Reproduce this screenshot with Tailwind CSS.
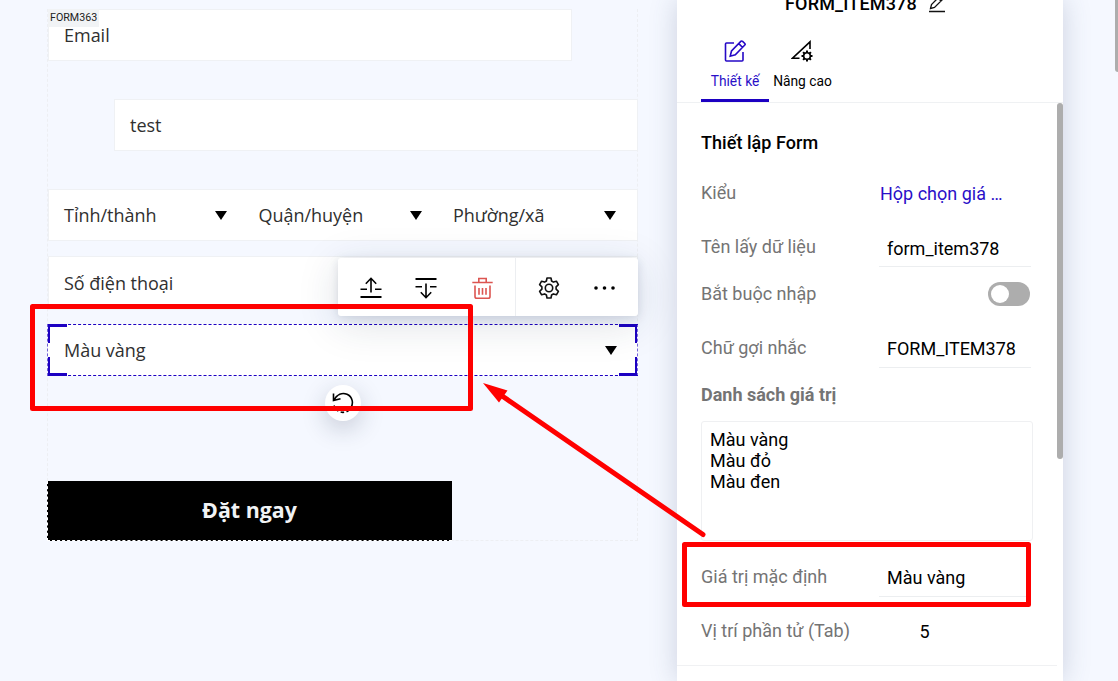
<!DOCTYPE html>
<html lang="vi">
<head>
<meta charset="utf-8">
<title>Form</title>
<script src="https://cdn.jsdelivr.net/npm/@tailwindcss/browser@4"></script>
</head>
<body class="relative flex h-[681px] w-[1118px] overflow-hidden bg-[#f5f8ff] font-['Roboto',sans-serif] text-black">

<main class="w-[677px] shrink-0 pt-[9px] pl-[47px]">
  <div class="relative flex h-[532px] w-[591px] flex-col items-start border-r border-b border-l border-dashed border-[#edeff3] font-['Open_Sans',sans-serif] text-[18px] leading-6 font-normal tracking-[-0.02px] text-[#303030] *:shrink-0">
    <span class="absolute top-0 left-0 h-[18px] w-[51px] bg-[#f1f3f5] pl-[2px] font-['Roboto',sans-serif] text-[10.7px] leading-[18px] font-normal tracking-normal text-[#222]">FORM363</span>
    <div class="flex h-[52px] w-[524px] items-center border border-[#eff1f4] bg-white pl-[15px]">Email</div>
    <div class="mt-[38px] ml-[66px] flex h-[52px] w-[524px] items-center border border-[#eff1f4] bg-white pl-[15px]">test</div>
    <div class="mt-[38px] flex h-[52px] w-[590px] items-center border border-[#eff1f4] bg-white pl-[15px]">
      <div class="flex w-[194.500px] shrink-0 items-center justify-between pr-[32px]">Tỉnh/thành<svg class="h-[9px] w-3" viewBox="0 0 12 9"><path d="M0 0H12L6 9Z"/></svg></div>
      <div class="flex w-[194.500px] shrink-0 items-center justify-between pr-[32px]">Quận/huyện<svg class="mr-[-1px] h-[9px] w-3" viewBox="0 0 12 9"><path d="M0 0H12L6 9Z"/></svg></div>
      <div class="flex w-[194.500px] shrink-0 items-center justify-between pr-[32px]">Phường/xã<svg class="h-[9px] w-3" viewBox="0 0 12 9"><path d="M0 0H12L6 9Z"/></svg></div>
    </div>
    <div class="mt-[15px] flex h-[54px] w-[590px] items-center border border-[#eff1f4] bg-white pl-[15px]">Số điện thoại</div>
    <div class="relative mt-[14px] flex h-[52px] w-[590px] items-center justify-between border-y border-dashed border-[#1c00c2] bg-white pr-[21px] pl-[16px]">
      Màu vàng<svg class="h-[9px] w-3" viewBox="0 0 12 9"><path d="M0 0H12L6 9Z"/></svg>
      <span class="absolute -top-px left-0 h-[19px] w-[19px] border-t-[3px] border-l-2 border-[#1c00c2]"></span>
      <span class="absolute -bottom-px left-0 h-[19px] w-[19px] border-b-[3px] border-l-2 border-[#1c00c2]"></span>
      <span class="absolute -top-px right-px h-[19px] w-[18px] border-t-[3px] border-r-2 border-[#1c00c2]"></span>
      <span class="absolute right-px -bottom-px h-[19px] w-[18px] border-r-2 border-b-[3px] border-[#1c00c2]"></span>
      <span class="absolute -top-px -left-px h-[52px] border-l border-dashed border-[#1c00c2]/60"></span>
      <span class="absolute -top-px right-0 h-[52px] border-l border-dashed border-[#1c00c2]/60"></span>
    </div>
    <div class="mt-[105px] -ml-px flex h-[60px] w-[405px] items-center justify-center border-b border-l border-dashed border-white bg-black pr-px pb-px font-bold text-[21.400px] tracking-normal text-[#f1f3f5]">Đặt ngay</div>

    <div class="absolute top-[249px] left-[290px] flex h-[58px] w-[300px] items-center rounded-[3px] bg-white shadow-[0_8px_40px_rgba(30,45,75,0.15),0_2px_10px_rgba(30,45,75,0.13)]">
      <div class="flex h-full w-[178px] items-center justify-between border-r border-[#eceef1] pt-[2px] pr-[22px] pl-[22px]">
        <svg class="h-[22px] w-[22px]" viewBox="0 0 22 22" fill="none" stroke="#000" stroke-width="1.6"><path d="M11 15.500V1.500M5.800 6.700L11 1.300l5.200 5.400M.5 12.300H7M15 12.300h6.500"/><path d="M.5 20H21.500" stroke-width="2"/></svg>
        <svg class="mr-[2px] h-[22px] w-[22px]" viewBox="0 0 22 22" fill="none" stroke="#000" stroke-width="1.6"><path d="M11 6.500V20.500M5.800 15.300L11 20.700l5.200-5.400M.5 9.700H7M15 9.700h6.500"/><path d="M.5 2H21.500" stroke-width="2"/></svg>
        <svg class="h-[22px] w-[21px]" viewBox="0 0 21 22" fill="none" stroke="#dc5551" stroke-width="1.6"><path d="M.3 5.500H20.700M6.800 5.300V1.500h7.400v3.800M3 8.500V19.400Q3 21.200 4.800 21.200H16.200Q18 21.200 18 19.400V8.500M7 11v6.700M10.500 11v6.700M14 11v6.700"/></svg>
      </div>
      <div class="flex flex-1 items-center justify-between pt-[2px] pr-[23px] pl-[22px]">
        <svg class="h-[22px] w-[22px]" viewBox="0 0 22 22" fill="none" stroke="#111" stroke-width="1.6" stroke-linejoin="round"><path d="M9 1h4l.6 3 1.800 1.100 3-.9 2 3.400-2.300 2.200v2.400l2.300 2.200-2 3.400-3-.9-1.800 1.100-.6 3H9l-.6-3-1.800-1.100-3 .9-2-3.400 2.300-2.200V9.800L1.600 7.600l2-3.400 3 .9L8.400 4z"/><circle cx="11" cy="11" r="3.700"/></svg>
        <svg class="h-[4px] w-[21px]" viewBox="0 0 21 4"><circle cx="2" cy="2" r="1.800"/><circle cx="10.500" cy="2" r="1.800"/><circle cx="19" cy="2" r="1.800"/></svg>
      </div>
    </div>
    <div class="absolute top-[376px] left-[277px] flex h-9 w-9 items-center justify-center rounded-full bg-white shadow-[0_8px_24px_rgba(30,45,75,0.22)]">
      <svg class="h-[22px] w-[22px]" viewBox="0 0 22 22" fill="none" stroke="#000" stroke-width="1.6"><path d="M1.500 1.500V8.500L8.500 6.800M2 8C5 2.500 10 .2 15 2.200C20.500 4.500 22 11.500 18.500 16.500"/><path d="M17.500 17.700C13 22 5 21.500 2 13.500" stroke-dasharray="3.500 2.500"/></svg>
    </div>
  </div>
</main>

<aside class="z-10 h-full w-[386px] shrink-0 bg-white shadow-[0_0_26px_rgba(60,75,110,0.22)]">
  <header class="h-[103px] overflow-hidden border-b border-[#eff1f3] pl-6">
    <div class="-mt-[8px] flex h-6 items-center pl-[84px] text-[18px] leading-6 font-medium tracking-[0.17px]">FORM_ITEM378
      <svg class="ml-[12px] h-[18px] w-4" viewBox="0 0 16 18" fill="none" stroke="#111" stroke-width="1.300"><path d="M0 16.500H16M1.500 13.500l1-4L11 1l3 3-8.500 8.500zM9 3l3 3"/></svg>
    </div>
    <nav class="mt-[24px] flex text-[13.800px] leading-5">
      <div class="flex h-[62px] w-[68px] flex-col items-center border-b-[3px] border-[#1c00c2] text-[#2a0fc8]">
        <svg class="h-[22px] w-[22px]" viewBox="0 0 22 22" fill="none" stroke="#2508c6" stroke-width="1.600"><path d="M10 3H2.500Q1.500 3 1.500 4V20Q1.500 21 2.500 21H18Q19 21 19 20V12"/><path d="M6.200 16.200l1.300-5.200L17 1.200Q17.800.7 18.600 1.400L20.800 3.500Q21.500 4.300 20.800 5L11.300 14.700zM14.800 3.600l3.600 3.700"/></svg>
        <span class="mt-[9px]">Thiết kế</span>
      </div>
      <div class="flex w-[67px] flex-col items-center">
        <svg class="-ml-px h-[22px] w-[22px]" viewBox="0 0 22 22" fill="none" stroke="#000" stroke-width="1.600"><path d="M19 9V1.800L1.500 18.200H8.500"/><circle cx="16" cy="16" r="3.300"/><path d="M16 10.500v2.200M16 19.300v2.200M10.500 16h2.200M19.300 16h2.200M12.100 12.100l1.600 1.600M18.300 18.300l1.600 1.600M12.100 19.900l1.600-1.600M18.300 13.700l1.600-1.600" stroke-width="2"/></svg>
        <span class="mt-[9px] whitespace-nowrap">Nâng cao</span>
      </div>
    </nav>
  </header>
  <div class="flex">
    <section class="flex h-[578px] w-[380px] flex-col pt-[19px] text-[18px] leading-6">
      <div class="h-[544px] shrink-0 border-b border-[#f0f1f3] pl-6">
        <h2 class="flex h-[42px] items-center font-medium tracking-[0.050px]">Thiết lập Form</h2>
        <div class="flex h-[58px] items-center"><span class="w-[179px] text-[#747474]">Kiểu</span><span class="mt-[2px] text-[#2a0fc8]">Hộp chọn giá …</span></div>
        <div class="flex h-[50px] items-center"><span class="w-[178px] text-[#747474]">Tên lấy dữ liệu</span><span class="mt-[4px] flex h-9 w-[152px] items-center border-b border-[#eceef0] pl-2">form_item378</span></div>
        <div class="flex h-[44px] items-center"><span class="w-[287px] text-[#747474]">Bắt buộc nhập</span><span class="flex h-6 w-[42px] items-center rounded-full bg-[#adadad] pl-[3px]"><i class="h-[18px] w-[18px] rounded-full bg-white"></i></span></div>
        <div class="flex h-[64px] items-center"><span class="w-[178px] text-[#747474]">Chữ gợi nhắc</span><span class="mt-[4px] flex h-9 w-[152px] items-center border-b border-[#eceef0] pb-[2px] pl-2">FORM_ITEM378</span></div>
        <h3 class="flex h-[30px] items-center font-bold text-[#747474]">Danh sách giá trị</h3>
        <div class="mt-[11px] h-[120px] w-[332px] rounded-[3px] border border-[#eff0f2] pt-[7px] pl-2 leading-[21px]">Màu vàng<br>Màu đỏ<br>Màu đen</div>
        <div class="flex h-[72px] items-center"><span class="w-[178px] text-[#747474]">Giá trị mặc định</span><span class="mt-[4px] flex h-9 w-[152px] items-center border-b border-[#eceef0] pb-[2px] pl-2">Màu vàng</span></div>
        <div class="flex h-[36px] items-center"><span class="w-[218.500px] text-[#747474]">Vị trí phần tử (Tab)</span><span class="mt-[1px]">5</span></div>
      </div>
    </section>
    <div class="h-[356px] w-[6px] rounded-[3px] bg-[#adadad]"></div>
  </div>
</aside>
<div class="ml-auto h-[72px] w-[3px] rounded-bl-[3px] bg-[#adadad]"></div>

<svg class="absolute inset-0 z-20 h-[681px] w-[1118px]" viewBox="0 0 1118 681" fill="none" stroke="#f00" stroke-width="5" stroke-linejoin="round" stroke-linecap="round">
  <rect x="32.500" y="306.500" width="438" height="102"/>
  <rect x="684.500" y="544.500" width="344" height="60"/>
  <path d="M703 534.500L500 394.500"/>
  <path d="M483 383L507.500 390.500L499 402.500Z" fill="#f00" stroke="none"/>
</svg>
</body>
</html>
